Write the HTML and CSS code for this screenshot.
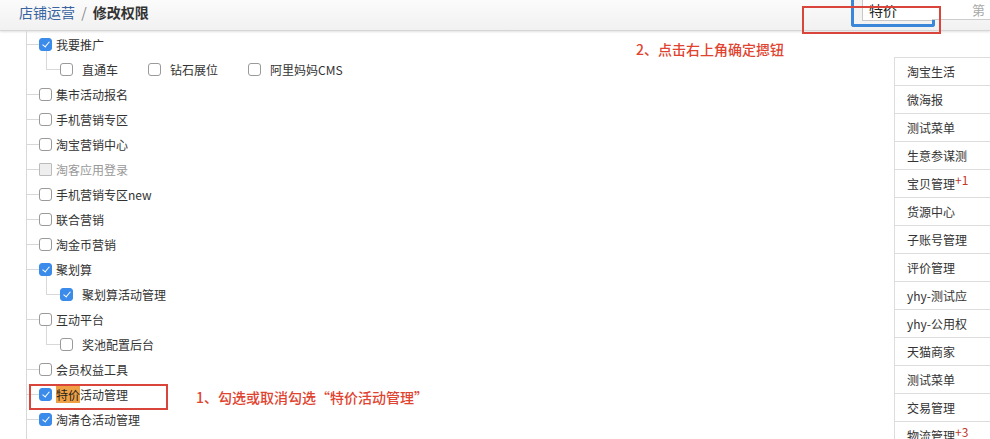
FILE: index.html
```html
<!DOCTYPE html>
<html lang="zh-CN">
<head>
  <meta charset="UTF-8" />
  <title>修改权限</title>
  <link rel="stylesheet" href="styles.css">
</head>
<body>

  <header class="topbar">
    <div class="crumb">
      <a href="#">店铺运营</a>
      <span class="sep">/</span>
      <strong>修改权限</strong>
    </div>
  </header>

  <!-- 右上角的弹出标签 -->
  <div class="tab-pop">
    <div class="tab-inner">特价</div>
  </div>
  <div class="tab-next">第</div>
  <div class="mark mark-top"></div>
  <div class="note note-top">2、点击右上角确定摁钮</div>

  <div class="page">
    <div class="tree">
      <div class="row"><span class="cb on"></span>我要推广</div>
      <div class="row child">
        <span class="item"><span class="cb"></span>直通车</span>
        <span class="item"><span class="cb"></span>钻石展位</span>
        <span class="item"><span class="cb"></span>阿里妈妈CMS</span>
      </div>
      <div class="row"><span class="cb"></span>集市活动报名</div>
      <div class="row"><span class="cb"></span>手机营销专区</div>
      <div class="row"><span class="cb"></span>淘宝营销中心</div>
      <div class="row off"><span class="cb"></span>淘客应用登录</div>
      <div class="row"><span class="cb"></span>手机营销专区new</div>
      <div class="row"><span class="cb"></span>联合营销</div>
      <div class="row"><span class="cb"></span>淘金币营销</div>
      <div class="row"><span class="cb on"></span>聚划算</div>
      <div class="row child">
        <span class="item"><span class="cb on"></span>聚划算活动管理</span>
      </div>
      <div class="row"><span class="cb"></span>互动平台</div>
      <div class="row child">
        <span class="item"><span class="cb"></span>奖池配置后台</span>
      </div>
      <div class="row"><span class="cb"></span>会员权益工具</div>
      <div class="row"><span class="cb on"></span><span class="hl">特价</span>活动管理</div>
      <div class="row"><span class="cb on"></span>淘清仓活动管理</div>
    </div>

    <ul class="side">
      <li>淘宝生活</li>
      <li>微海报</li>
      <li>测试菜单</li>
      <li>生意参谋测</li>
      <li>宝贝管理<sup>+1</sup></li>
      <li>货源中心</li>
      <li>子账号管理</li>
      <li>评价管理</li>
      <li>yhy-测试应</li>
      <li>yhy-公用权</li>
      <li>天猫商家</li>
      <li>测试菜单</li>
      <li>交易管理</li>
      <li>物流管理<sup>+3</sup></li>
    </ul>
  </div>

  <div class="mark mark-left"></div>
  <div class="note note-left">1、勾选或取消勾选“特价活动管理”</div>

</body>
</html>
```

FILE: styles.css
```css
body {
  margin: 0;
  font-family: "Noto Sans CJK SC", "Noto Sans", sans-serif;
  font-size: 12px;
  color: #333;
  background: #fff;
  height: 439px;
  overflow: hidden;
  position: relative;
}

.topbar {
  height: 30px;
  background: linear-gradient(#fbfbfb, #f1f1f1);
  border-bottom: 1px solid #d6d6d6;
  box-shadow: 0 1px 2px rgba(0,0,0,0.12);
  display: flex;
  align-items: center;
  padding-left: 19px;
}

.crumb {
  font-size: 14px;
  line-height: 1;
  margin-top: -7px;
}

.crumb a {
  color: #3a64a0;
  text-decoration: none;
}

.crumb .sep {
  color: #888;
  margin: 0 3px;
}

.crumb strong {
  color: #333;
  font-weight: bold;
}

.page {
  display: flex;
  align-items: flex-start;
}

/* 权限树 */
.tree {
  flex: 1;
  margin-left: 26px;
  border-left: 1px solid #d8d8d8;
  padding-top: 1px;
  padding-bottom: 20px;
}

.row {
  height: 25px;
  display: flex;
  align-items: center;
  position: relative;
  white-space: nowrap;
}

.row::before {
  content: "";
  width: 12px;
  border-top: 1px solid #d8d8d8;
}

.row.child::before {
  position: absolute;
  left: 19px;
  top: -6px;
  width: 13px;
  height: 18px;
  border-top: none;
  border-left: 1px solid #d8d8d8;
  border-bottom: 1px solid #d8d8d8;
}

.row.child {
  padding-left: 33px;
}

.row.child .item {
  display: flex;
  align-items: center;
  margin-right: 30px;
}

.row.child .cb {
  margin-right: 9px;
}

.row.off {
  color: #999;
}

.cb {
  width: 11px;
  height: 11px;
  border: 1px solid #9a9a9a;
  border-radius: 3px;
  background: #fff;
  margin-right: 4px;
  position: relative;
  flex: none;
}

.row.off .cb {
  background: #eee;
  border-color: #bbb;
  border-radius: 1px;
}

.cb.on {
  background: #3b8bea;
  border-color: #3b8bea;
}

.cb.on::after {
  content: "";
  position: absolute;
  left: 4px;
  top: 1px;
  width: 3px;
  height: 6px;
  border-right: 1.5px solid #fff;
  border-bottom: 1.5px solid #fff;
  transform: rotate(40deg);
}

.hl {
  background: #f0a044;
  color: #222;
}

/* 右侧菜单 */
.side {
  list-style: none;
  margin: 26px 0 0;
  padding: 0;
  width: 110px;
  flex: none;
  margin-right: -15px;
  border-left: 1px solid #ddd;
  border-top: 1px solid #ddd;
}

.side li {
  height: 27px;
  line-height: 27px;
  padding-left: 12px;
  border-bottom: 1px solid #ddd;
  white-space: nowrap;
}

.side sup {
  color: #c0392b;
  font-size: 12px;
  vertical-align: 4px;
  line-height: 0;
}

/* 顶部弹出标签 */
.tab-pop {
  position: absolute;
  left: 851px;
  top: -4px;
  width: 78px;
  height: 28px;
  border: 3px solid #3a86d8;
  border-top: none;
  border-radius: 0 0 3px 3px;
  background: #f3f3f3;
}

.tab-inner {
  margin-left: 8px;
  height: 25px;
  background: #fff;
  border-left: 1px solid #c8c8c8;
  border-bottom: 1px solid #c8c8c8;
  font-size: 14px;
  line-height: 1;
  padding: 7px 0 0 6px;
  box-sizing: border-box;
  color: #222;
}

.tab-next {
  position: absolute;
  left: 932px;
  top: 0;
  width: 58px;
  height: 20px;
  border-bottom: 1px solid #ccc;
  background: #fff;
  color: #aaa;
  font-size: 13px;
  padding: 3px 0 0 40px;
  box-sizing: border-box;
  line-height: 14px;
}

/* 标注 */
.mark {
  position: absolute;
  border: 2px solid #d9453a;
  box-sizing: border-box;
}

.mark-top {
  left: 802px;
  top: 6px;
  width: 139px;
  height: 28px;
}

.mark-left {
  left: 29px;
  top: 384px;
  width: 139px;
  height: 26px;
}

.note {
  position: absolute;
  color: #e0432f;
  font-size: 14px;
  font-weight: 500;
  line-height: 1;
  white-space: nowrap;
}

.note-top {
  left: 636px;
  top: 42px;
}

.note-left {
  left: 196px;
  top: 390px;
}
```
